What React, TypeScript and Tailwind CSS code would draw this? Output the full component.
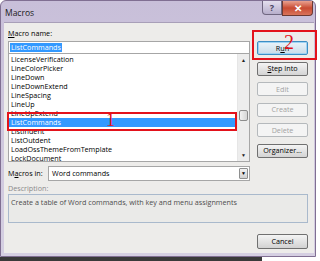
const macros = [
  'LicenseVerification',
  'LineColorPicker',
  'LineDown',
  'LineDownExtend',
  'LineSpacing',
  'LineUp',
  'LineUpExtend',
  'ListCommands',
  'ListIndent',
  'ListOutdent',
  'LoadOssThemeFromTemplate',
  'LockDocument',
]

function Btn({ children, disabled, primary }: { children: React.ReactNode; disabled?: boolean; primary?: boolean }) {
  if (disabled) {
    return (
      <div className="flex h-[14px] items-center justify-center rounded-[2px] border border-[#b5b9bc] bg-[#f4f4f4] text-[#a3a3a3]">
        {children}
      </div>
    )
  }
  return (
    <div
      className={
        primary
          ? 'flex h-[14px] items-center justify-center rounded-[2px] border border-[#3c8ec4] bg-gradient-to-b from-[#eaf4fa] to-[#c9dce8] shadow-[inset_0_0_0_1px_#9fd3f3]'
          : 'flex h-[14px] items-center justify-center rounded-[2px] border border-[#707070] bg-gradient-to-b from-[#f4f4f4] to-[#d4d4d4]'
      }
    >
      {children}
    </div>
  )
}

export default function App() {
  return (
    <div className="relative h-[261px] w-[320px] overflow-hidden bg-white font-['Open_Sans',sans-serif] text-[7.2px] leading-[9px] text-black">
      <div className="absolute bottom-0 left-0 h-[4px] w-[262px] bg-[#3a3a3a]" />
      <div className="relative flex h-[257px] w-[316px] flex-col rounded-t-[6px] border border-[#806f92] bg-gradient-to-b from-[#c8bfd9] to-[#d5cfe2]">
        {/* title bar */}
        <div className="flex h-[21px] items-start">
          <span className="ml-[4px] mt-[6px] text-[8.5px] leading-[11px] text-[#1a1a1a]">Macros</span>
          <div className="ml-auto mr-[2px] flex">
            <div className="flex h-[14px] w-[20px] items-center justify-center rounded-bl-[4px] border border-t-0 border-[#6f6680] bg-gradient-to-b from-[#e4dfee] to-[#b7aecb] text-[9px] font-bold text-[#4a4460]">
              ?
            </div>
            <div className="flex h-[15px] w-[31px] items-center justify-center rounded-br-[4px] border border-t-0 border-[#6d3a32] bg-gradient-to-b from-[#e9a08f] via-[#c84a32] to-[#d9735a] text-[10px] font-bold text-white">
              ✕
            </div>
          </div>
        </div>

        {/* client area */}
        <div className="ml-[3px] flex h-[231px] w-[310px] flex-col border-t border-[#a89fb8] bg-[#edecea] pl-[4px] pt-[3px]">
          <div className="flex">
            <div className="flex w-[242px] flex-col">
              <div className="flex h-[15px] items-center">
                <span>
                  <span className="underline">M</span>acro name:
                </span>
              </div>
              <div className="flex h-[13px] items-center border border-[#a6a6a6] bg-white pl-[1px]">
                <span className="bg-[#3399ff] px-[1px] text-white">ListCommands</span>
              </div>
              <div className="flex h-[108px] border border-t-0 border-[#a6a6a6] bg-white">
                <div className="flex flex-1 flex-col pt-[1px]">
                  {macros.map((m) => (
                    <div
                      key={m}
                      className={
                        m === 'ListCommands'
                          ? 'flex h-[9px] items-center bg-[#3399ff] pl-[2px] text-white'
                          : 'flex h-[9px] items-center pl-[2px]'
                      }
                    >
                      {m}
                    </div>
                  ))}
                </div>
                <div className="flex w-[12px] flex-col border-l border-[#e6e6e6] bg-[#ededed]">
                  <div className="flex h-[12px] items-center justify-center text-[5px] text-[#222]">▲</div>
                  <div className="mx-[1px] mt-[44px] h-[11px] rounded-[2px] border border-[#8c8c8c] bg-gradient-to-r from-[#f2f2f2] to-[#d6d6d6]" />
                  <div className="mt-auto flex h-[12px] items-center justify-center text-[5px] text-[#222]">▼</div>
                </div>
              </div>
            </div>

            <div className="ml-[7px] mt-[15px] flex w-[51px] flex-col gap-[6.5px]">
              <Btn primary>
                <span>
                  R<span className="underline">u</span>n
                </span>
              </Btn>
              <Btn>
                <span>
                  <span className="underline">S</span>tep Into
                </span>
              </Btn>
              <Btn disabled>Edit</Btn>
              <Btn disabled>Create</Btn>
              <Btn disabled>Delete</Btn>
              <Btn>
                <span>
                  Or<span className="underline">g</span>anizer...
                </span>
              </Btn>
            </div>
          </div>

          <div className="mt-[4px] flex h-[15px] items-center">
            <span className="w-[40px]">
              M<span className="underline">a</span>cros in:
            </span>
            <div className="flex h-[15px] w-[202px] items-center border border-[#a6a6a6] bg-white pl-[3px]">
              <span>Word commands</span>
              <div className="ml-auto mr-[1px] flex h-[11px] w-[9px] items-center justify-center rounded-[1px] border border-[#8e8f8f] bg-gradient-to-b from-[#f2f2f2] to-[#d2d2d2] text-[5px]">
                ▼
              </div>
            </div>
          </div>

          <div className="mt-[2px] flex h-[10px] items-center text-[#8b8b8b]">Description:</div>
          <div className="mt-[1px] h-[29px] w-[300px] border border-[#a9b9cc] bg-[#eaeae8] px-[2px] pt-[3px] text-[#4d4d4d]">
            Create a table of Word commands, with key and menu assignments
          </div>

          <div className="mr-[6px] mt-[11px] w-[51px] self-end">
            <div className="flex h-[15px] items-center justify-center rounded-[2px] border border-[#707070] bg-gradient-to-b from-[#f4f4f4] to-[#d2d2d2]">
              Cancel
            </div>
          </div>
        </div>
      </div>

      {/* annotations */}
      <div className="absolute left-[7px] top-[112px] h-[19px] w-[230px] border-2 border-[#e3121b]" />
      <span className="absolute left-[106px] top-[110px] font-['Liberation_Serif',serif] text-[18px] leading-[20px] text-[#e3121b]">1</span>
      <div className="absolute left-[252px] top-[30px] h-[30px] w-[65px] border-2 border-[#e3121b]" />
      <span className="absolute left-[284px] top-[31px] font-['Liberation_Serif',serif] text-[20px] leading-[22px] text-[#e3121b]">2</span>
    </div>
  )
}
